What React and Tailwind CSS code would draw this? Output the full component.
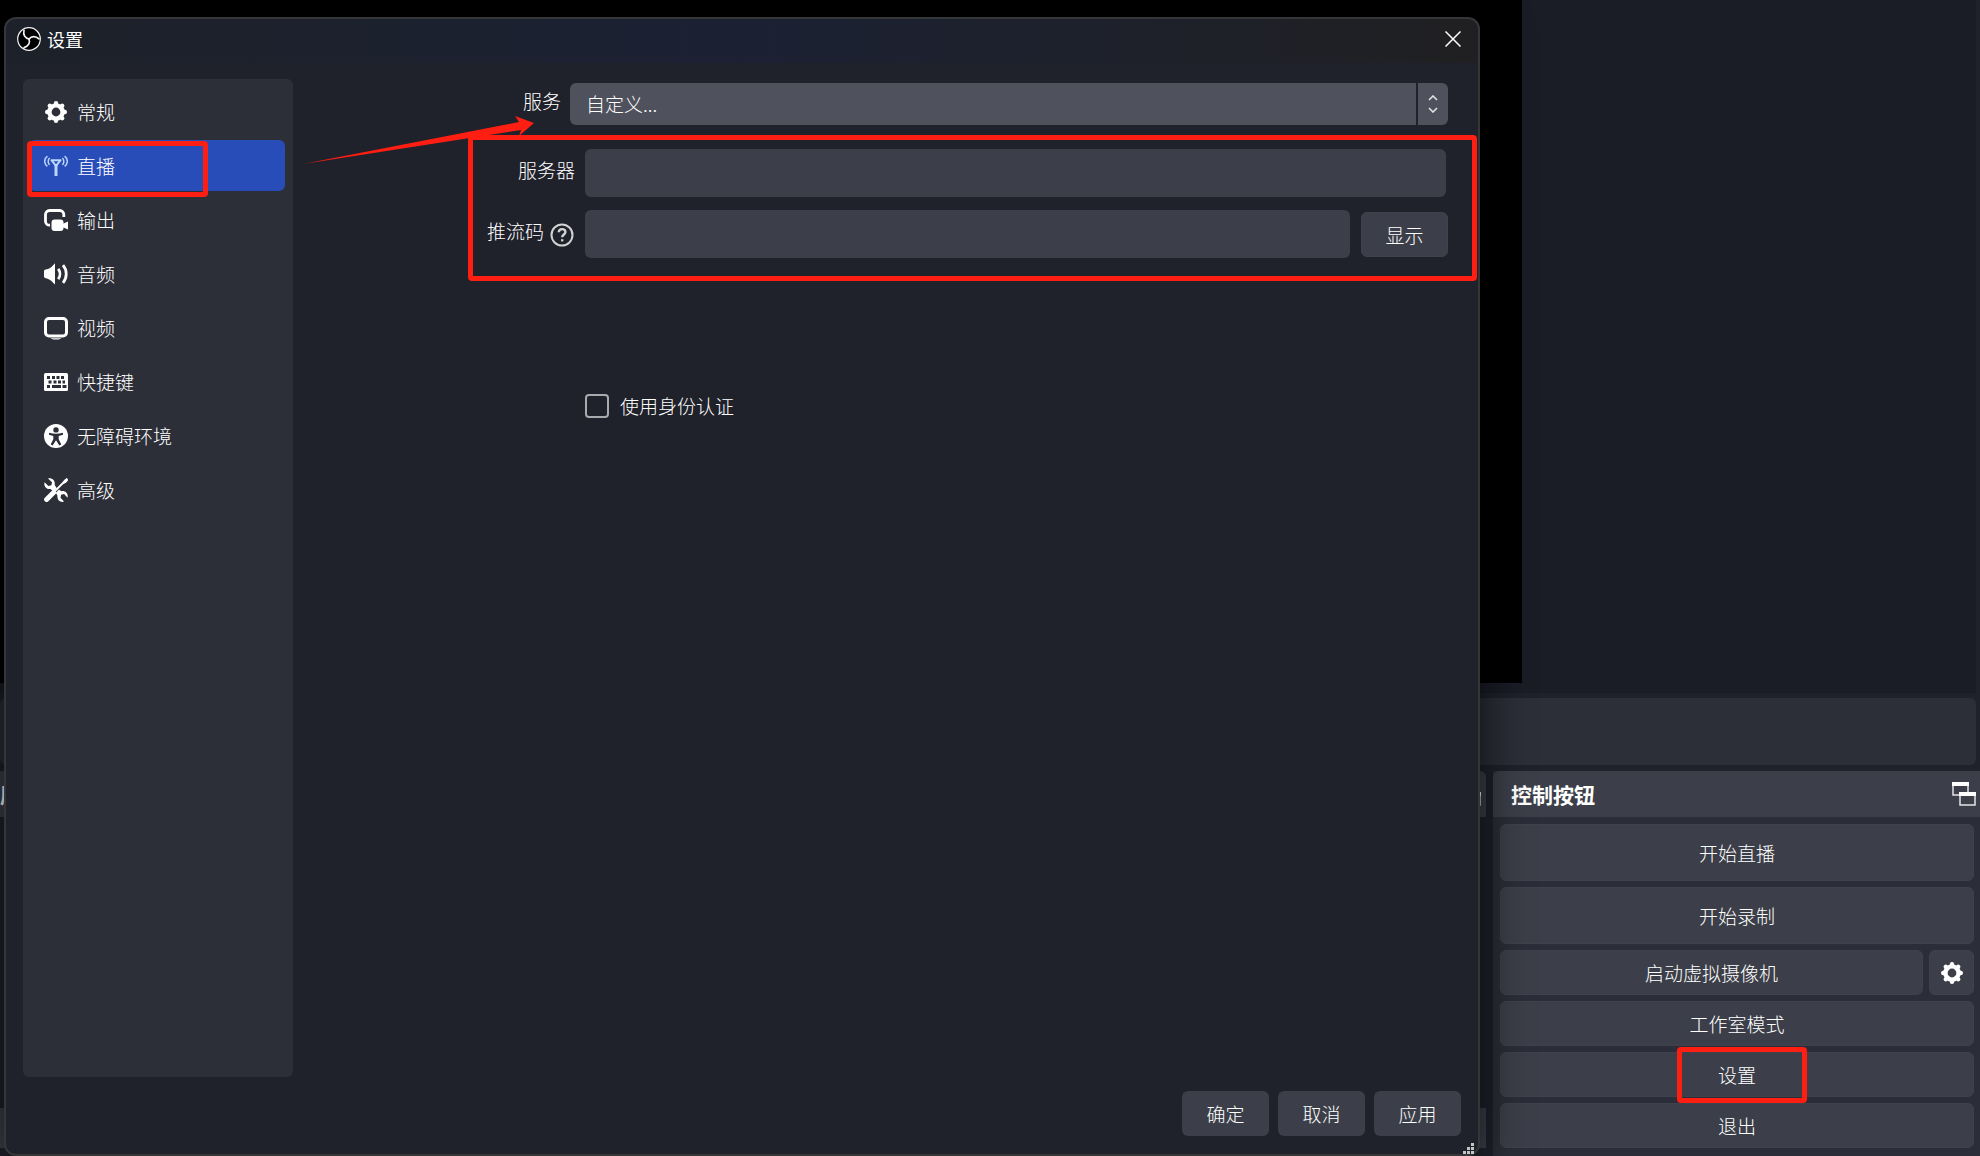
import { useState } from 'react';

function ObsLogo() {
  return (
    <svg viewBox="0 0 24 24" className="w-6 h-6 shrink-0" fill="none" stroke="#f2f2f2" aria-hidden="true">
      <circle cx="12" cy="12" r="11.300" fill="#000" strokeWidth="1.200" />
      {[0, 120, 240].map(a => (
        <path key={a} d="M12 12C8.200 11.300 5.800 8 7 3.400" strokeWidth="1.700" strokeLinecap="round" transform={`rotate(${a} 12 12)`} />
      ))}
    </svg>
  );
}

function GearIcon() {
  return (
    <svg viewBox="0 0 24 24" className="w-6 h-6 shrink-0" fill="none" stroke="currentColor" aria-hidden="true">
      <circle cx="12" cy="12" r="6.6" strokeWidth="4.4" />
      {[0, 45, 90, 135, 180, 225, 270, 315].map(a => (
        <path key={a} d="M12 4.4V3.2" strokeWidth="4.4" strokeLinecap="round" transform={`rotate(${a} 12 12)`} />
      ))}
    </svg>
  );
}

function StreamIcon() {
  return (
    <svg viewBox="0 0 24 24" className="w-6 h-6 shrink-0 text-[#b9d6fb]" fill="none" stroke="currentColor" aria-hidden="true">
      <path d="M3.4 2.2C-.2 5 -.2 10 3.4 12.4M20.6 2.2c3.6 2.8 3.6 7.800 0 10.200" strokeWidth="1.500" />
      <path d="M5.600 4C3.700 5.800 3.700 9 5.600 10.800M18.400 4c1.900 1.800 1.900 5 0 6.800" strokeWidth="1.500" />
      <path d="M7.400 6.200h9.200L12 11.800z" strokeWidth="2" strokeLinejoin="round" />
      <path d="M12 10v12" strokeWidth="3" />
    </svg>
  );
}

function OutputIcon() {
  return (
    <svg viewBox="0 0 24 24" className="w-6 h-6 shrink-0" fill="currentColor" aria-hidden="true">
      <path d="M6 17.200H5.500a4 4 0 0 1-4-4V6.500a4 4 0 0 1 4-4h10.300a4 4 0 0 1 4 4V9" fill="none" stroke="currentColor" strokeWidth="2.800" />
      <rect x="7.500" y="11.500" width="12" height="11.500" rx="3" />
      <path d="M18.500 16l5.500-2.500v8L18.500 19z" />
    </svg>
  );
}

function AudioIcon() {
  return (
    <svg viewBox="0 0 24 24" className="w-6 h-6 shrink-0" fill="none" stroke="currentColor" aria-hidden="true">
      <path d="M0 9.500C0 8 1 7.500 3 7.300 6 6.800 8.500 4 11 1.200v21.400C8.500 20 6 17.200 3 16.500 1 16.200 0 15.700 0 14.500z" fill="currentColor" stroke="none" />
      <path d="M14.200 6.800c2.300 3 2.300 7.400 0 10.400" strokeWidth="2.800" />
      <path d="M19 3.200c4.300 5 4.300 12.600 0 17.600" strokeWidth="2.800" />
    </svg>
  );
}

function VideoIcon() {
  return (
    <svg viewBox="0 0 24 24" className="w-6 h-6 shrink-0" fill="none" stroke="currentColor" aria-hidden="true">
      <rect x="1.500" y="2.500" width="21" height="17.500" rx="3.500" strokeWidth="3" />
      <path d="M6.500 22.200h11c-1.500 1.700-9.500 1.700-11 0z" fill="currentColor" stroke="none" />
    </svg>
  );
}

function KeyboardIcon() {
  return (
    <svg viewBox="0 0 24 24" className="w-6 h-6 shrink-0" aria-hidden="true">
      <rect y="3" width="24" height="18" rx="1.500" fill="currentColor" />
      <g stroke="#2c2e38" strokeWidth="3">
        <path d="M3 7.500h3M8 7.500h3M12.500 7.500h3M17 7.500h3" />
        <path d="M4.500 12h3M9.500 12h3M14 12h3M18.500 12h2.500" />
        <path d="M3 16.500h3M8 16.500h9M18.500 16.500h4" />
      </g>
    </svg>
  );
}

function AccessIcon() {
  return (
    <svg viewBox="0 0 24 24" className="w-6 h-6 shrink-0" aria-hidden="true">
      <circle cx="12" cy="12" r="12" fill="currentColor" />
      <circle cx="12" cy="5.900" r="2.700" fill="#2c2e38" />
      <path d="M5 8.800c5 1.200 9 1.200 14 0v1.900l-4.300 1.300v3.200l2.600 5.300-2 .9-3.100-5h-.4l-3.100 5-2-.9 2.600-5.300V12L5 10.700z" fill="#2c2e38" />
    </svg>
  );
}

function ToolsIcon() {
  return (
    <svg viewBox="0 0 24 24" className="w-6 h-6 shrink-0" fill="none" stroke="currentColor" aria-hidden="true">
      <path d="M4 .5l4 3.800-.6 3-3 .7L.6 4.200C-.6 8 2.200 11.600 6.500 11l3 2.500 3.300-3.300L10.700 7C11.500 2.500 8 -.5 4 .5z" fill="currentColor" stroke="none" />
      <path d="M20 23.600l-3.500-3.800.6-3 3-.7 3.400 3.600c1.200-4.200-2.400-7.500-6.300-6.500L15 11.500l-3.200 3.200 1.700 3.100c-.6 4.200 2.700 7 6.500 5.800z" fill="currentColor" stroke="none" />
      <path d="M2.600 21.400l7-7" strokeWidth="5" strokeLinecap="round" />
      <path d="M11 13l9-9" strokeWidth="1.800" />
      <path d="M19 5l1.500-3L23 .5l.9.9L22.400 4 19.500 5.500z" fill="currentColor" strokeWidth="1" />
    </svg>
  );
}

function HelpIcon() {
  return (
    <svg viewBox="0 0 24 24" className="w-6 h-6 shrink-0 text-[#d2d2d2]" fill="none" stroke="currentColor" aria-hidden="true">
      <circle cx="12" cy="12" r="10.500" strokeWidth="2" />
      <path d="M8.800 9.300c0-4.200 6.600-4.200 6.600-.3 0 2.400-3.200 2.600-3.200 5.300" strokeWidth="2.400" />
      <path d="M12.200 16.200v2.200" strokeWidth="2.400" />
    </svg>
  );
}

function FloatIcon() {
  return (
    <svg viewBox="0 0 24 24" className="w-6 h-6 shrink-0" aria-hidden="true">
      <path d="M1 1h15v12H1z" fill="none" stroke="#e4e4e6" strokeWidth="1.500" />
      <path d="M0 0h17v4H0z" fill="#fff" />
      <path d="M8 11h15v12H8z" fill="#3c3f49" stroke="#e4e4e6" strokeWidth="1.500" />
      <path d="M7 10h17v4H7z" fill="#fff" />
    </svg>
  );
}

const secciones = [
  { id: 'general', nombre: '常规', Icono: GearIcon },
  { id: 'stream', nombre: '直播', Icono: StreamIcon },
  { id: 'output', nombre: '输出', Icono: OutputIcon },
  { id: 'audio', nombre: '音频', Icono: AudioIcon },
  { id: 'video', nombre: '视频', Icono: VideoIcon },
  { id: 'hotkeys', nombre: '快捷键', Icono: KeyboardIcon },
  { id: 'access', nombre: '无障碍环境', Icono: AccessIcon },
  { id: 'advanced', nombre: '高级', Icono: ToolsIcon },
];

function DockButton({ children, alto = 'h-[45px]' }) {
  return (
    <button type="button" className={`${alto} w-full rounded-md bg-[#3c3f49] border border-[#3f424c] text-center`}>
      {children}
    </button>
  );
}

function MainWindow() {
  return (
    <>
      <div className="flex-1 mr-1 pb-[10px] bg-[#1a1c26] flex">
        <div className="w-[77%] bg-black" />
      </div>
      <div className="h-[67px] mt-[5px] mr-1 rounded-md bg-[#2c2e38]" />

      <div className="flex gap-[7px] mt-[6px]">
        <section className="flex-1 min-w-0 flex flex-col">
          <header className="h-[46px] rounded-tr-md bg-[#3c3f49] flex items-center justify-between pr-[5px]">
            <h2 className="text-[21px] font-bold">原</h2>
            <FloatIcon />
          </header>
          <div className="flex-1 bg-[#20222c]" />
          <div className="h-[48px] bg-[#3c3f49] border-b-8 border-[#20222c]" />
        </section>

        <section className="w-[487px] bg-[#2b2d38] flex flex-col">
          <header className="h-[46px] rounded-tl-md bg-[#3c3f49] flex items-center justify-between pl-[18px] pr-1">
            <h2 className="text-[21px] font-bold">控制按钮</h2>
            <button type="button" aria-label="浮动"><FloatIcon /></button>
          </header>
          <div className="flex flex-col gap-[6px] pt-[7px] pb-2 pl-[7px] pr-[6px]">
            <DockButton alto="h-[57px]">开始直播</DockButton>
            <DockButton alto="h-[57px]">开始录制</DockButton>
            <div className="flex gap-[6px]">
              <DockButton>启动虚拟摄像机</DockButton>
              <button type="button" aria-label="虚拟摄像机设置" className="w-[45px] shrink-0 h-[45px] rounded-md bg-[#3c3f49] border border-[#3f424c] flex items-center justify-center">
                <GearIcon />
              </button>
            </div>
            <DockButton>工作室模式</DockButton>
            <div className="relative">
              <DockButton>设置</DockButton>
              <div className="absolute -top-[5px] left-1/2 -ml-[60px] w-[130px] h-[56px] border-5 border-[#ff1e12] rounded-[4px] pointer-events-none" />
            </div>
            <DockButton>退出</DockButton>
          </div>
        </section>
      </div>
    </>
  );
}

function Sidebar({ activa, onCambiar }) {
  return (
    <nav className="w-[270px] shrink-0 rounded-md bg-[#2c2e38] pt-[7px] pl-[6px] pr-2 flex flex-col gap-[3px]">
      {secciones.map(({ id, nombre, Icono }) => (
        <div key={id} className="relative">
          <button
            type="button"
            onClick={() => onCambiar(id)}
            className={`w-full h-[51px] rounded-md pl-[15px] flex items-center gap-[9px] ${activa === id ? 'bg-[#284cb8]' : ''}`}
          >
            <Icono />
            {nombre}
          </button>
          {id === 'stream' && (
            <div className="absolute top-px -left-[2px] w-[181px] h-[56px] border-5 border-[#ff1e12] rounded-[4px] pointer-events-none" />
          )}
        </div>
      ))}
    </nav>
  );
}

function StreamForm() {
  const [autenticar, setAutenticar] = useState(false);

  return (
    <form className="relative flex-1 min-w-0 pt-1 pr-[13px]">
      <div className="flex gap-2">
        <label htmlFor="servicio" className="w-[269px] shrink-0 pt-1 pr-px text-right">服务</label>
        <div className="relative flex-1">
          <select id="servicio" className="appearance-none block w-full h-[42px] rounded-md bg-[#4f525d] pl-4">
            <option>自定义...</option>
          </select>
          <span className="absolute inset-y-0 right-0 w-8 border-l-2 border-[#1f212b] flex items-center justify-center pointer-events-none">
            <svg viewBox="0 0 10 18" className="w-[10px] h-[18px]" fill="none" stroke="#e2e2e4" strokeWidth="1.600" aria-hidden="true">
              <path d="M1 5l4-4 4 4M1 13l4 4 4-4" />
            </svg>
          </span>
        </div>
      </div>

      <div className="relative mt-6 flex flex-col gap-[13px]">
        <div className="flex gap-[9px]">
          <label htmlFor="servidor" className="w-[283px] shrink-0 pt-[7px] pr-px text-right">服务器</label>
          <input id="servidor" type="text" className="flex-1 min-w-0 h-12 mr-[2px] px-4 rounded-md bg-[#3c3f49]" />
        </div>
        <div className="flex gap-[9px]">
          <div className="w-[283px] shrink-0 pt-[7px] pr-[2px] flex justify-end gap-[6px]">
            <label htmlFor="clave">推流码</label>
            <span className="pt-[6px]"><HelpIcon /></span>
          </div>
          <input id="clave" type="password" className="flex-1 min-w-0 h-12 px-4 rounded-md bg-[#3c3f49]" />
          <button type="button" className="w-[87px] h-[45px] mt-[2px] ml-[2px] rounded-md bg-[#3c3f49] border border-[#3f424c]">显示</button>
        </div>
        <div className="absolute -top-[14px] -bottom-[23px] left-[175px] -right-[29px] border-5 border-[#ff1e12] rounded-[4px] pointer-events-none" />
      </div>

      <label className="mt-[134px] ml-[292px] flex w-fit items-center gap-[11px]">
        <input
          type="checkbox"
          checked={autenticar}
          onChange={e => setAutenticar(e.target.checked)}
          className="appearance-none w-6 h-6 border-2 border-[#a9aaad] rounded-[4px] checked:bg-[#284cb8]"
        />
        使用身份认证
      </label>

      <svg viewBox="0 0 232 50" className="absolute left-[10px] top-[36px] w-[232px] h-[50px] pointer-events-none" fill="#ff1e12" aria-hidden="true">
        <path d="M0 49L216 7l-4-6 19 7-15 13 2-6z" />
      </svg>
    </form>
  );
}

function SettingsDialog() {
  const [activa, setActiva] = useState('stream');

  return (
    <div role="dialog" aria-label="设置" className="absolute top-[17px] left-1 right-[500px] bottom-0 flex flex-col rounded-xl border-2 border-[#353638] bg-[#1f212b] shadow-[0_10px_50px_rgba(0,0,0,0.7)]">
      <header className="h-[44px] pb-1 rounded-t-xl bg-linear-to-r from-[#1d2129] via-[#1b2133] to-[#202022] flex items-center pl-[11px] pr-[17px]">
        <ObsLogo />
        <h1 className="text-[18px] font-normal ml-[6px] flex-1">设置</h1>
        <button type="button" aria-label="关闭">
          <svg viewBox="0 0 16 16" className="w-4 h-4" fill="none" stroke="currentColor" strokeWidth="1.500" aria-hidden="true">
            <path d="M.5.5l15 15M15.500.5l-15 15" />
          </svg>
        </button>
      </header>

      <div className="flex-1 flex px-[17px] pt-4">
        <Sidebar activa={activa} onCambiar={setActiva} />
        <StreamForm />
      </div>

      <footer className="relative flex justify-end gap-[9px] pt-[14px] pb-[18px] pr-[17px]">
        {['确定', '取消', '应用'].map(texto => (
          <button key={texto} type="button" className="w-[87px] h-[45px] rounded-md bg-[#3c3f49]">{texto}</button>
        ))}
        <svg viewBox="0 0 11 11" className="absolute right-1 bottom-0 w-[11px] h-[11px]" fill="#c4c4c4" aria-hidden="true">
          <path d="M8 0h3v3H8zM4 4h3v3H4zM8 4h3v3H8zM0 8h3v3H0zM4 8h3v3H4zM8 8h3v3H8z" />
        </svg>
      </footer>
    </div>
  );
}

export default function App() {
  return (
    <div className="relative min-h-screen flex flex-col overflow-hidden bg-[#1f212b] text-white text-[19px] font-light leading-7 font-['Noto_Sans_CJK_SC',sans-serif]">
      <MainWindow />
      <SettingsDialog />
    </div>
  );
}
